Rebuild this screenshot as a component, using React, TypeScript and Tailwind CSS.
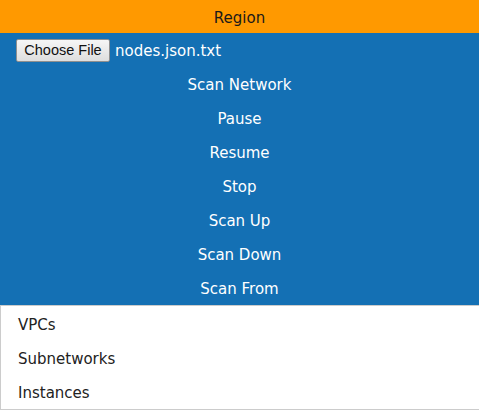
const actions = [
  "Scan Network",
  "Pause",
  "Resume",
  "Stop",
  "Scan Up",
  "Scan Down",
  "Scan From",
];

const layers = ["VPCs", "Subnetworks", "Instances"];

const App = () => {
  return (
    <div
      className="w-[479px] h-[412px] overflow-hidden bg-white text-[15px]"
      style={{ fontFamily: '"DejaVu Sans", Verdana, sans-serif' }}
    >
      {/* Header */}
      <div className="h-[33px] pt-[3px] bg-[#ff9900] flex items-center justify-center text-[#1a1a1a]">
        Region
      </div>

      {/* Controls */}
      <div className="bg-[#1470b4] text-white">
        <div className="h-[34px] flex items-center pl-[16px] gap-[5px]">
          <button
            className="h-[23px] w-[94px] rounded-[2px] border border-[#8f8f8f] bg-gradient-to-b from-[#f6f6f6] to-[#dedede] text-[#111] text-[14.5px] leading-none"
            style={{ fontFamily: '"Liberation Sans", Arial, sans-serif' }}
          >
            Choose File
          </button>
          <span className="pt-[2px]">nodes.json.txt</span>
        </div>
        {actions.map((a) => (
          <button
            key={a}
            className="w-full h-[34px] pt-[3px] flex items-center justify-center text-white"
          >
            {a}
          </button>
        ))}
      </div>

      {/* Layer list */}
      <ul className="border-t border-b border-l border-[#cccccc] pt-[1px] text-[#222]">
        {layers.map((l) => (
          <li key={l} className="h-[34px] pt-[3px] flex items-center pl-[17px]">
            {l}
          </li>
        ))}
      </ul>
    </div>
  );
};

export default App;
